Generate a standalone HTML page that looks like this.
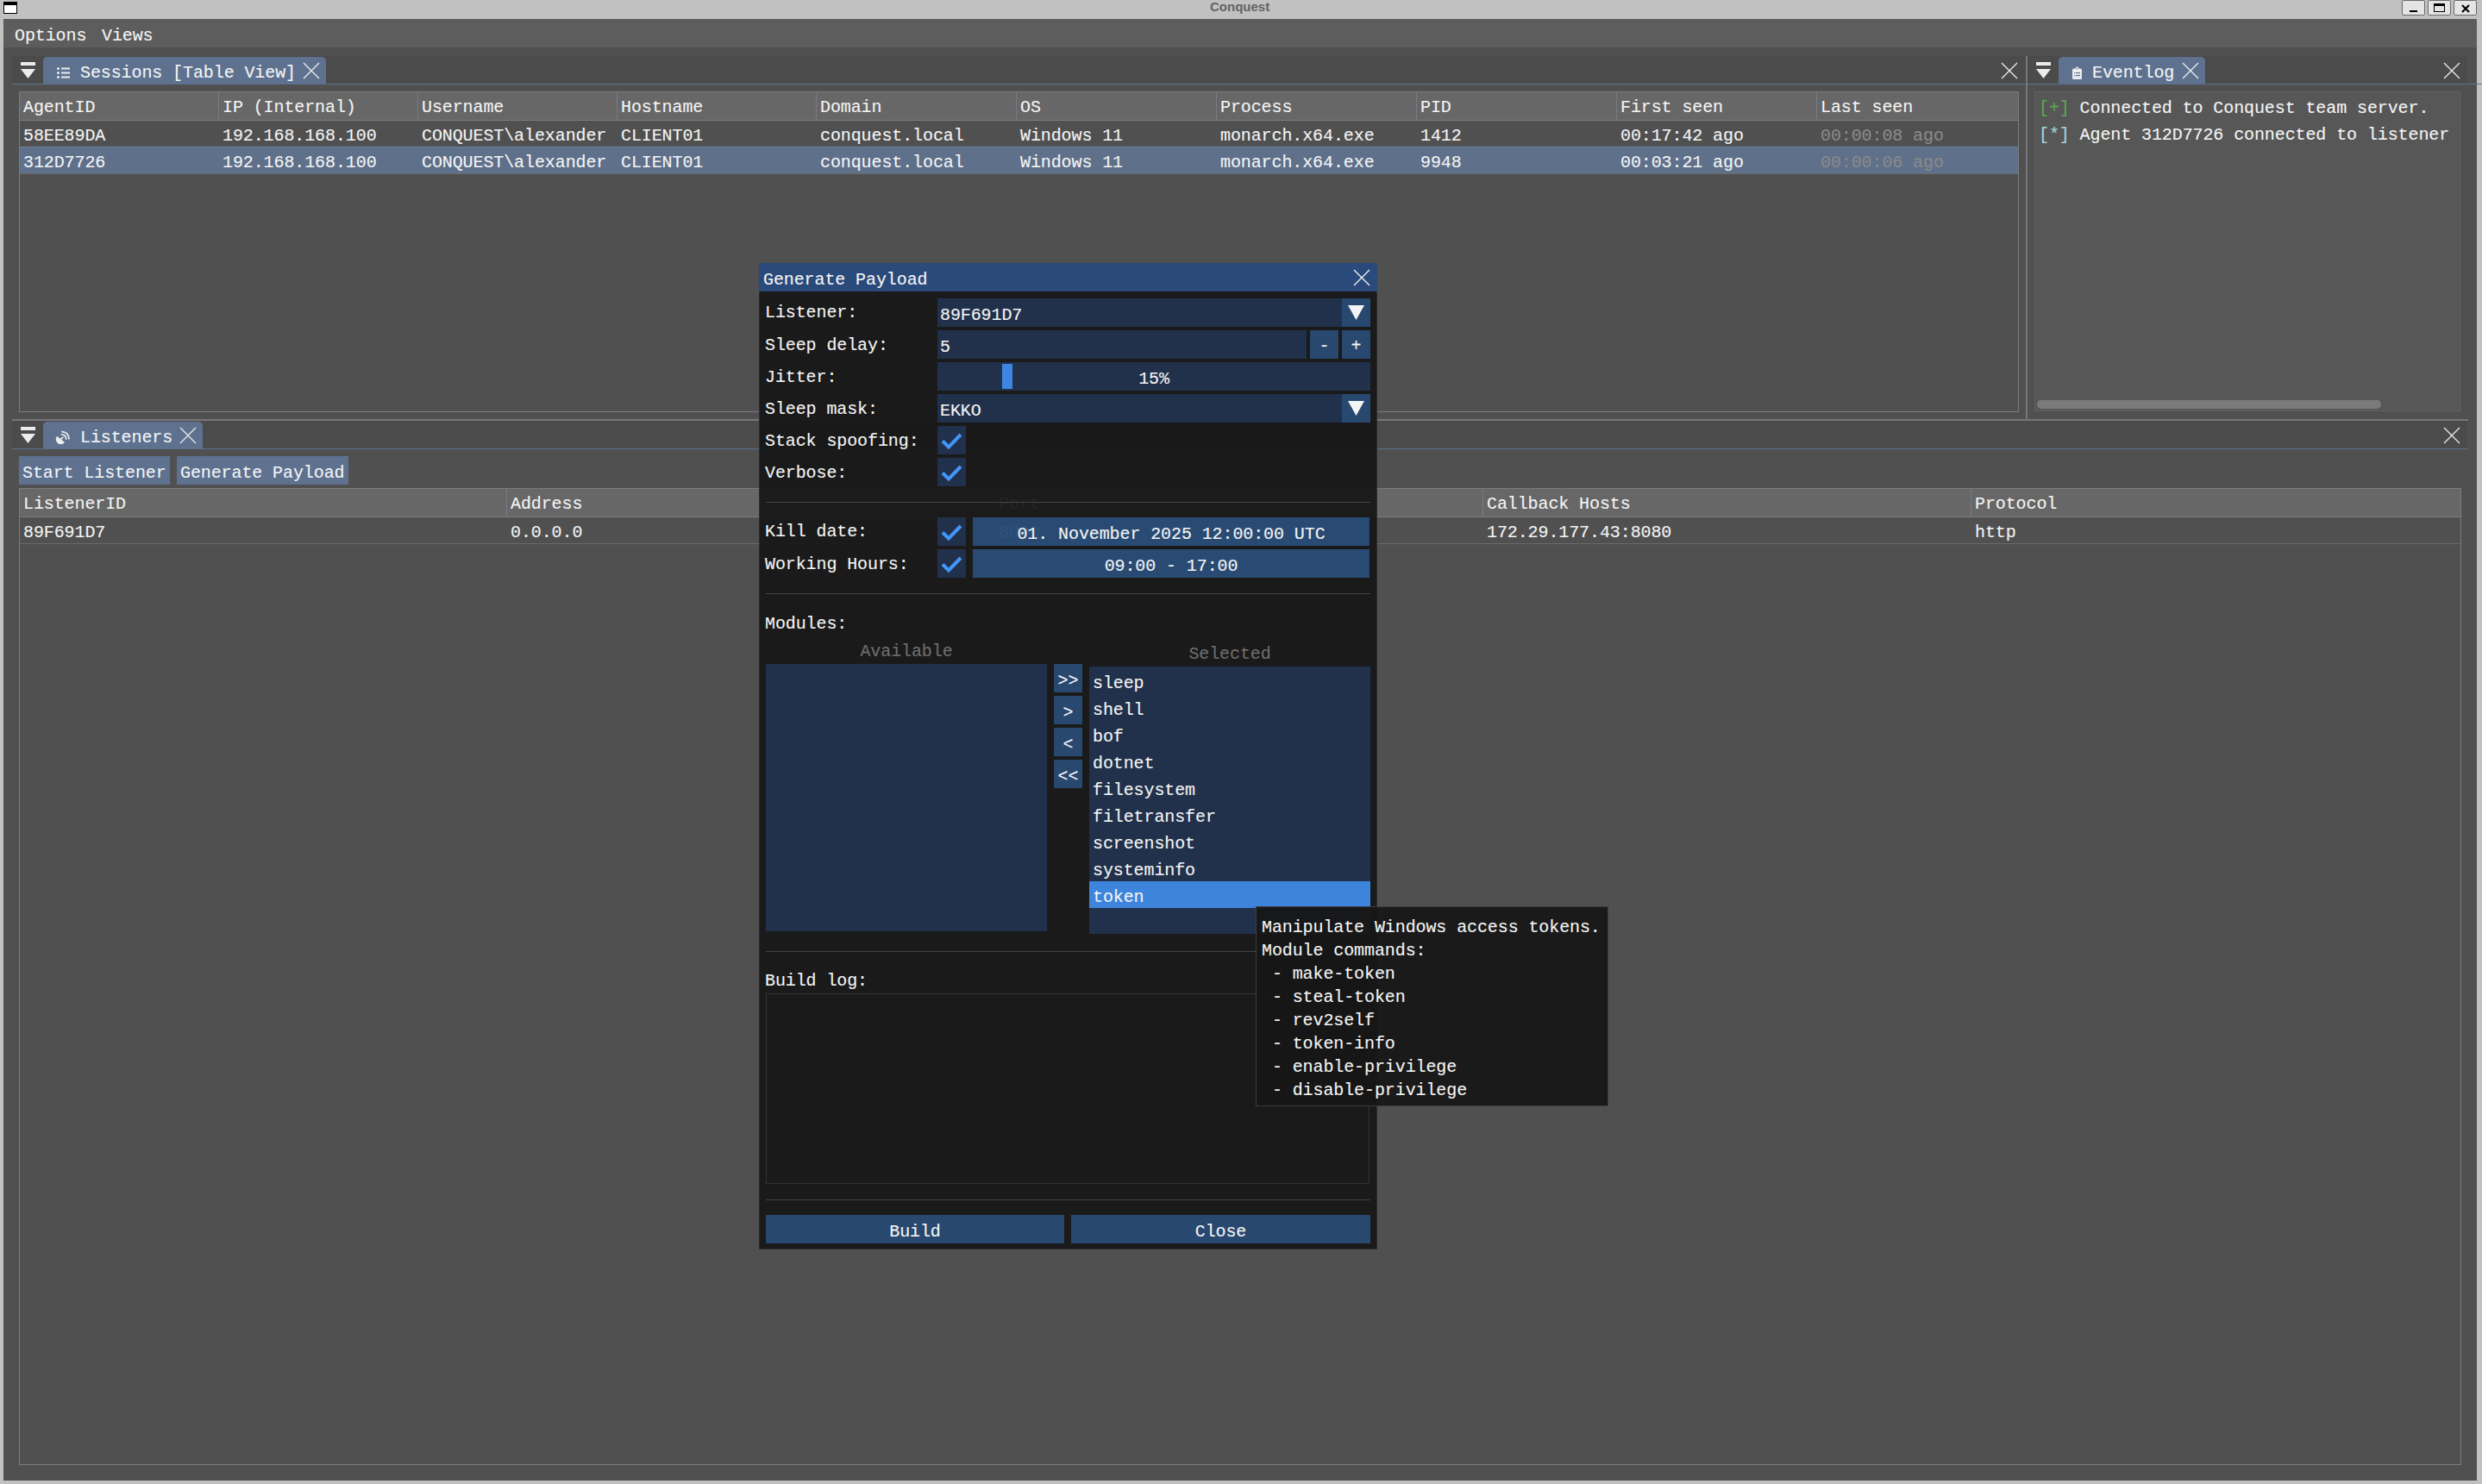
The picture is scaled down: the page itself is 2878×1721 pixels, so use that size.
<!DOCTYPE html>
<html><head><meta charset="utf-8">
<style>
html,body{margin:0;padding:0;}
body{width:2878px;height:1721px;position:relative;overflow:hidden;background:#c1c1c1;font-family:"Liberation Mono",monospace;}
div,span{box-sizing:border-box;}
.a{position:absolute;}
.t{position:absolute;white-space:pre;font-family:"Liberation Mono",monospace;font-size:20px;line-height:27px;letter-spacing:-0.1px;color:#f4f4f4;-webkit-text-stroke:0.12px currentColor;}
.g{color:#8a8a8a;}
.g2{color:#6e6e6e;}
.hl{position:absolute;height:1px;}
.vl{position:absolute;width:1px;}
svg{position:absolute;overflow:visible;}
</style></head><body>

<!-- ===== window frame ===== -->
<div class="a" style="left:4px;top:2px;width:16px;height:14px;background:#000;"></div>
<div class="a" style="left:5px;top:6px;width:14px;height:9px;background:#fff;"></div>
<div class="a" style="left:0;top:0;width:2878px;height:22px;font-family:'Liberation Sans',sans-serif;font-weight:bold;font-size:15px;line-height:22px;text-align:center;color:#636363;">
<span style="position:absolute;left:1403px;top:-3px;">Conquest</span></div>

<!-- app area -->
<div class="a" id="app" style="left:4px;top:22px;width:2868px;height:1695px;background:#505050;"></div>
<!-- menu bar -->
<div class="a" style="left:4px;top:22px;width:2868px;height:33px;background:#5d5d5d;"></div>
<div class="t" style="left:17px;top:28px;">Options</div>
<div class="t" style="left:118px;top:28px;">Views</div>


<!-- window buttons -->
<div class="a" style="left:2785px;top:0px;width:27px;height:18px;background:#e4e4e4;border:1px solid #6a6a6a;border-radius:2px;"></div>
<div class="a" style="left:2794px;top:12px;width:9px;height:2px;background:#000;"></div>
<div class="a" style="left:2815px;top:0px;width:27px;height:18px;background:#e4e4e4;border:1px solid #6a6a6a;border-radius:2px;"></div>
<div class="a" style="left:2822px;top:4px;width:13px;height:10px;border:1px solid #000;border-top-width:3px;"></div>
<div class="a" style="left:2845px;top:0px;width:27px;height:18px;background:#e4e4e4;border:1px solid #6a6a6a;border-radius:2px;"></div>
<svg style="left:2854px;top:5px;" width="10" height="10"><path d="M1 1L9 9M9 1L1 9" stroke="#000" stroke-width="2.2"/></svg>

<!-- ===== Sessions dock ===== -->
<div class="a" style="left:14px;top:65px;width:2335px;height:32px;background:#4b4b4b;"></div>
<div class="a" style="left:24px;top:72px;width:17px;height:4px;background:#ececec;"></div>
<svg style="left:24px;top:80px;" width="17" height="11"><path d="M0 0H17L8.5 11Z" fill="#ececec"/></svg>
<div class="a" style="left:50px;top:66px;width:328px;height:31px;background:#5e7290;border-radius:5px 5px 0 0;"></div>
<div class="hl" style="left:14px;top:97px;width:2335px;background:#5e7290;"></div>
<svg style="left:66px;top:78px;" width="15" height="13"><g fill="#ececec"><circle cx="1.5" cy="1.5" r="1.5"/><circle cx="1.5" cy="6.5" r="1.5"/><circle cx="1.5" cy="11.5" r="1.5"/><rect x="5" y="0.5" width="10" height="2"/><rect x="5" y="5.5" width="10" height="2"/><rect x="5" y="10.5" width="10" height="2"/></g></svg>
<div class="t" style="left:93px;top:71px;">Sessions [Table View]</div>
<svg style="left:352px;top:73px;" width="18" height="18"><path d="M0 0L18 18M18 0L0 18" stroke="#ececec" stroke-width="1.3"/></svg>
<svg style="left:2321px;top:73px;" width="18" height="18"><path d="M0 0L18 18M18 0L0 18" stroke="#ececec" stroke-width="1.3"/></svg>

<!-- sessions table -->
<div class="a" style="left:22px;top:106px;width:2319px;height:372px;border:1px solid #7b7b83;"></div>
<div class="a" style="left:23px;top:107px;width:2317px;height:32px;background:#676767;"></div>
<div class="hl" style="left:23px;top:139px;width:2317px;background:#7b7b83;"></div>
<div class="a" style="left:23px;top:171px;width:2317px;height:30px;background:#5e708a;"></div>
<div class="hl" style="left:23px;top:170px;width:2317px;background:#6f8099;"></div>
<div class="hl" style="left:23px;top:201px;width:2317px;background:#6a6a6e;"></div>
<div class="vl" style="left:253px;top:108px;height:31px;background:#7b7b83;"></div>
<div class="vl" style="left:484px;top:108px;height:31px;background:#7b7b83;"></div>
<div class="vl" style="left:715px;top:108px;height:31px;background:#7b7b83;"></div>
<div class="vl" style="left:946px;top:108px;height:31px;background:#7b7b83;"></div>
<div class="vl" style="left:1178px;top:108px;height:31px;background:#7b7b83;"></div>
<div class="vl" style="left:1410px;top:108px;height:31px;background:#7b7b83;"></div>
<div class="vl" style="left:1642px;top:108px;height:31px;background:#7b7b83;"></div>
<div class="vl" style="left:1874px;top:108px;height:31px;background:#7b7b83;"></div>
<div class="vl" style="left:2106px;top:108px;height:31px;background:#7b7b83;"></div>
<div class="t" style="left:27px;top:111px;">AgentID</div>
<div class="t" style="left:258px;top:111px;">IP (Internal)</div>
<div class="t" style="left:489px;top:111px;">Username</div>
<div class="t" style="left:720px;top:111px;">Hostname</div>
<div class="t" style="left:951px;top:111px;">Domain</div>
<div class="t" style="left:1183px;top:111px;">OS</div>
<div class="t" style="left:1415px;top:111px;">Process</div>
<div class="t" style="left:1647px;top:111px;">PID</div>
<div class="t" style="left:1879px;top:111px;">First seen</div>
<div class="t" style="left:2111px;top:111px;">Last seen</div>
<div class="t" style="left:27px;top:144px;">58EE89DA</div>
<div class="t" style="left:258px;top:144px;">192.168.168.100</div>
<div class="t" style="left:489px;top:144px;">CONQUEST\alexander</div>
<div class="t" style="left:720px;top:144px;">CLIENT01</div>
<div class="t" style="left:951px;top:144px;">conquest.local</div>
<div class="t" style="left:1183px;top:144px;">Windows 11</div>
<div class="t" style="left:1415px;top:144px;">monarch.x64.exe</div>
<div class="t" style="left:1647px;top:144px;">1412</div>
<div class="t" style="left:1879px;top:144px;">00:17:42 ago</div>
<div class="t g" style="left:2111px;top:144px;">00:00:08 ago</div>
<div class="t" style="left:27px;top:175px;">312D7726</div>
<div class="t" style="left:258px;top:175px;">192.168.168.100</div>
<div class="t" style="left:489px;top:175px;">CONQUEST\alexander</div>
<div class="t" style="left:720px;top:175px;">CLIENT01</div>
<div class="t" style="left:951px;top:175px;">conquest.local</div>
<div class="t" style="left:1183px;top:175px;">Windows 11</div>
<div class="t" style="left:1415px;top:175px;">monarch.x64.exe</div>
<div class="t" style="left:1647px;top:175px;">9948</div>
<div class="t" style="left:1879px;top:175px;">00:03:21 ago</div>
<div class="t g" style="left:2111px;top:175px;">00:00:06 ago</div>


<!-- ===== splitters ===== -->
<div class="a" style="left:2349px;top:65px;width:2px;height:421px;background:#76767b;"></div>
<div class="a" style="left:14px;top:486px;width:2848px;height:2px;background:#76767b;"></div>

<!-- ===== Eventlog dock ===== -->
<div class="a" style="left:2351px;top:65px;width:510px;height:32px;background:#4b4b4b;"></div>
<div class="a" style="left:2361px;top:72px;width:17px;height:4px;background:#ececec;"></div>
<svg style="left:2361px;top:80px;" width="17" height="11"><path d="M0 0H17L8.5 11Z" fill="#ececec"/></svg>
<div class="a" style="left:2387px;top:66px;width:170px;height:31px;background:#5e7290;border-radius:5px 5px 0 0;"></div>
<div class="hl" style="left:2351px;top:97px;width:2510px;background:#5e7290;"></div>
<svg style="left:2403px;top:77px;" width="11" height="15"><path d="M1.5 2.5H3.5A2 2 0 0 1 7.5 2.5H9.5A1.5 1.5 0 0 1 11 4V13.5A1.5 1.5 0 0 1 9.5 15H1.5A1.5 1.5 0 0 1 0 13.5V4A1.5 1.5 0 0 1 1.5 2.5Z" fill="#ececec"/><g fill="#5e7290"><circle cx="5.5" cy="2.6" r="0.8"/><rect x="2" y="7" width="1.2" height="1.2"/><rect x="4" y="7" width="5" height="1.2"/><rect x="2" y="10" width="1.2" height="1.2"/><rect x="4" y="10" width="5" height="1.2"/></g></svg>
<div class="t" style="left:2426px;top:71px;">Eventlog</div>
<svg style="left:2531px;top:73px;" width="18" height="18"><path d="M0 0L18 18M18 0L0 18" stroke="#ececec" stroke-width="1.3"/></svg>
<svg style="left:2834px;top:73px;" width="18" height="18"><path d="M0 0L18 18M18 0L0 18" stroke="#ececec" stroke-width="1.3"/></svg>
<div class="a" style="left:2359px;top:106px;width:494px;height:371px;background:#575757;border:1px solid #616161;"></div>
<div class="t" style="left:2364px;top:112px;"><span style="color:#5ca852">[+]</span> Connected to Conquest team server.</div>
<div class="t" style="left:2364px;top:143px;"><span style="color:#a6d6e0">[*]</span> Agent 312D7726 connected to listener</div>
<div class="a" style="left:2362px;top:464px;width:399px;height:10px;background:#7a7a7a;border-radius:5px;"></div>

<!-- ===== Listeners dock ===== -->
<div class="a" style="left:14px;top:488px;width:2847px;height:32px;background:#4b4b4b;"></div>
<div class="a" style="left:24px;top:495px;width:17px;height:4px;background:#ececec;"></div>
<svg style="left:24px;top:503px;" width="17" height="11"><path d="M0 0H17L8.5 11Z" fill="#ececec"/></svg>
<div class="a" style="left:50px;top:489px;width:185px;height:31px;background:#5e7290;border-radius:5px 5px 0 0;"></div>
<div class="hl" style="left:14px;top:520px;width:2847px;background:#5e7290;"></div>
<svg style="left:60px;top:495px;" width="30" height="25"><path d="M6.1 10.7A5.8 5.8 0 0 0 15.1 18.1Z" fill="#ececec"/><g fill="none" stroke="#ececec" stroke-width="1.8" stroke-linecap="round"><path d="M10.8 14.2L12.7 12.4"/><path d="M11.6 8.8A5.2 5.2 0 0 1 16.8 14"/><path d="M11.9 5.6A8.1 8.1 0 0 1 20 13.7"/></g></svg>
<div class="t" style="left:93px;top:494px;">Listeners</div>
<svg style="left:209px;top:496px;" width="18" height="18"><path d="M0 0L18 18M18 0L0 18" stroke="#ececec" stroke-width="1.3"/></svg>
<svg style="left:2834px;top:496px;" width="18" height="18"><path d="M0 0L18 18M18 0L0 18" stroke="#ececec" stroke-width="1.3"/></svg>
<div class="a" style="left:22px;top:529px;width:175px;height:33px;background:#5e7290;"></div>
<div class="t" style="left:26px;top:535px;">Start Listener</div>
<div class="a" style="left:205px;top:529px;width:199px;height:33px;background:#5e7290;"></div>
<div class="t" style="left:209px;top:535px;">Generate Payload</div>
<!-- listeners table -->
<div class="a" style="left:22px;top:566px;width:2832px;height:1133px;border:1px solid #7b7b83;"></div>
<div class="a" style="left:23px;top:567px;width:2830px;height:32px;background:#676767;"></div>
<div class="hl" style="left:23px;top:599px;width:2830px;background:#7b7b83;"></div>
<div class="hl" style="left:23px;top:630px;width:2830px;background:#6a6a6e;"></div>
<div class="vl" style="left:587px;top:568px;height:31px;background:#7b7b83;"></div>
<div class="vl" style="left:1153px;top:568px;height:31px;background:#7b7b83;"></div>
<div class="vl" style="left:1719px;top:568px;height:31px;background:#7b7b83;"></div>
<div class="vl" style="left:2285px;top:568px;height:31px;background:#7b7b83;"></div>
<div class="t" style="left:27px;top:571px;">ListenerID</div>
<div class="t" style="left:592px;top:571px;">Address</div>
<div class="t" style="left:1158px;top:571px;">Port</div>
<div class="t" style="left:1724px;top:571px;">Callback Hosts</div>
<div class="t" style="left:2290px;top:571px;">Protocol</div>
<div class="t" style="left:27px;top:604px;">89F691D7</div>
<div class="t" style="left:592px;top:604px;">0.0.0.0</div>
<div class="t" style="left:1158px;top:604px;">8080</div>
<div class="t" style="left:1724px;top:604px;">172.29.177.43:8080</div>
<div class="t" style="left:2290px;top:604px;">http</div>


<!-- ===== Generate Payload dialog ===== -->
<div class="a" style="left:880px;top:305px;width:717px;height:1144px;background:rgba(22,22,22,0.94);border:1px solid rgba(60,60,70,0.6);"></div>
<div class="a" style="left:880px;top:305px;width:717px;height:33px;background:#294a7a;"></div>
<div class="t" style="left:885px;top:311px;">Generate Payload</div>
<svg style="left:1570px;top:313px;" width="18" height="18"><path d="M0 0L18 18M18 0L0 18" stroke="#f4f4f4" stroke-width="1.3"/></svg>
<div class="t" style="left:887px;top:349px;">Listener:</div>
<div class="t" style="left:887px;top:386.5px;">Sleep delay:</div>
<div class="t" style="left:887px;top:423.5px;">Jitter:</div>
<div class="t" style="left:887px;top:460.5px;">Sleep mask:</div>
<div class="t" style="left:887px;top:497.5px;">Stack spoofing:</div>
<div class="t" style="left:887px;top:534.5px;">Verbose:</div>
<div class="t" style="left:887px;top:603px;">Kill date:</div>
<div class="t" style="left:887px;top:640.5px;">Working Hours:</div>
<div class="t" style="left:887px;top:709.5px;">Modules:</div>
<div class="t" style="left:887px;top:1124px;">Build log:</div>
<div class="a" style="left:1087px;top:346px;width:502px;height:33px;background:#21314b;"></div>
<div class="a" style="left:1556px;top:346px;width:33px;height:33px;background:#284870;"></div>
<svg style="left:1563px;top:354px;" width="19" height="17"><path d="M0 0H19L9.5 17Z" fill="#f4f4f4"/></svg>
<div class="t" style="left:1090px;top:352px;">89F691D7</div>
<div class="a" style="left:1087px;top:383px;width:428px;height:33px;background:#21314b;"></div>
<div class="a" style="left:1519px;top:383px;width:33px;height:33px;background:#284870;"></div>
<div class="a" style="left:1556px;top:383px;width:33px;height:33px;background:#284870;"></div>
<div class="t" style="left:1090px;top:389px;">5</div>
<div class="t" style="left:1519px;top:388px;width:33px;text-align:center;">-</div>
<div class="t" style="left:1556px;top:388px;width:33px;text-align:center;">+</div>
<div class="a" style="left:1087px;top:420px;width:502px;height:33px;background:#21314b;"></div>
<div class="a" style="left:1162px;top:422px;width:12px;height:29px;background:#3d85e0;"></div>
<div class="t" style="left:1087px;top:425.5px;width:502px;text-align:center;">15%</div>
<div class="a" style="left:1087px;top:457px;width:502px;height:33px;background:#21314b;"></div>
<div class="a" style="left:1556px;top:457px;width:33px;height:33px;background:#284870;"></div>
<svg style="left:1563px;top:465px;" width="19" height="17"><path d="M0 0H19L9.5 17Z" fill="#f4f4f4"/></svg>
<div class="t" style="left:1090px;top:463px;">EKKO</div>
<div class="a" style="left:1087px;top:494px;width:33px;height:33px;background:#21314b;"></div>
<svg style="left:1087px;top:494px;" width="33" height="33"><path d="M6 17.5L13 24.5L27 10" fill="none" stroke="#4296fa" stroke-width="4"/></svg>
<div class="a" style="left:1087px;top:531px;width:33px;height:33px;background:#21314b;"></div>
<svg style="left:1087px;top:531px;" width="33" height="33"><path d="M6 17.5L13 24.5L27 10" fill="none" stroke="#4296fa" stroke-width="4"/></svg>
<div class="hl" style="left:888px;top:582px;width:701px;background:#424249;"></div>
<div class="a" style="left:1087px;top:600px;width:33px;height:33px;background:#21314b;"></div>
<svg style="left:1087px;top:600px;" width="33" height="33"><path d="M6 17.5L13 24.5L27 10" fill="none" stroke="#4296fa" stroke-width="4"/></svg>
<div class="a" style="left:1128px;top:600px;width:460px;height:33px;background:rgba(66,150,250,0.4);"></div>
<div class="t" style="left:1128px;top:605.5px;width:460px;text-align:center;">01. November 2025 12:00:00 UTC</div>
<div class="a" style="left:1087px;top:637px;width:33px;height:33px;background:#21314b;"></div>
<svg style="left:1087px;top:637px;" width="33" height="33"><path d="M6 17.5L13 24.5L27 10" fill="none" stroke="#4296fa" stroke-width="4"/></svg>
<div class="a" style="left:1128px;top:637px;width:460px;height:33px;background:rgba(66,150,250,0.4);"></div>
<div class="t" style="left:1128px;top:642.5px;width:460px;text-align:center;">09:00 - 17:00</div>
<div class="hl" style="left:888px;top:688px;width:701px;background:#424249;"></div>
<div class="t g2" style="left:888px;top:741.5px;width:326px;text-align:center;">Available</div>
<div class="t g2" style="left:1263px;top:744.5px;width:326px;text-align:center;">Selected</div>
<div class="a" style="left:888px;top:770px;width:326px;height:310px;background:#21314b;"></div>
<div class="a" style="left:1222px;top:770px;width:33px;height:33px;background:#284870;"></div>
<div class="t" style="left:1222px;top:775.5px;width:33px;text-align:center;">&gt;&gt;</div>
<div class="a" style="left:1222px;top:807px;width:33px;height:33px;background:#284870;"></div>
<div class="t" style="left:1222px;top:812.5px;width:33px;text-align:center;">&gt;</div>
<div class="a" style="left:1222px;top:844px;width:33px;height:33px;background:#284870;"></div>
<div class="t" style="left:1222px;top:849.5px;width:33px;text-align:center;">&lt;</div>
<div class="a" style="left:1222px;top:881px;width:33px;height:33px;background:#284870;"></div>
<div class="t" style="left:1222px;top:886.5px;width:33px;text-align:center;">&lt;&lt;</div>
<div class="a" style="left:1263px;top:773px;width:326px;height:310px;background:#21314b;"></div>
<div class="a" style="left:1263px;top:1022px;width:326px;height:31px;background:#3d84dc;"></div>
<div class="t" style="left:1267px;top:779px;">sleep</div>
<div class="t" style="left:1267px;top:810px;">shell</div>
<div class="t" style="left:1267px;top:841px;">bof</div>
<div class="t" style="left:1267px;top:872px;">dotnet</div>
<div class="t" style="left:1267px;top:903px;">filesystem</div>
<div class="t" style="left:1267px;top:934px;">filetransfer</div>
<div class="t" style="left:1267px;top:965px;">screenshot</div>
<div class="t" style="left:1267px;top:996px;">systeminfo</div>
<div class="t" style="left:1267px;top:1027px;">token</div>
<div class="hl" style="left:888px;top:1103px;width:701px;background:#424249;"></div>
<div class="a" style="left:888px;top:1152px;width:700px;height:221px;border:1px solid #333338;"></div>
<div class="hl" style="left:888px;top:1391px;width:701px;background:#424249;"></div>
<div class="a" style="left:888px;top:1409px;width:346px;height:33px;background:#284870;"></div>
<div class="t" style="left:888px;top:1415px;width:346px;text-align:center;">Build</div>
<div class="a" style="left:1242px;top:1409px;width:347px;height:33px;background:#284870;"></div>
<div class="t" style="left:1242px;top:1415px;width:347px;text-align:center;">Close</div>

<!-- ===== tooltip ===== -->
<div class="a" style="left:1456px;top:1051px;width:409px;height:232px;background:rgba(22,22,22,0.94);border:1px solid #3c3c44;"></div>
<div class="t" style="left:1463px;top:1062px;">Manipulate Windows access tokens.</div>
<div class="t" style="left:1463px;top:1089px;">Module commands:</div>
<div class="t" style="left:1463px;top:1116px;"> - make-token</div>
<div class="t" style="left:1463px;top:1143px;"> - steal-token</div>
<div class="t" style="left:1463px;top:1170px;"> - rev2self</div>
<div class="t" style="left:1463px;top:1197px;"> - token-info</div>
<div class="t" style="left:1463px;top:1224px;"> - enable-privilege</div>
<div class="t" style="left:1463px;top:1251px;"> - disable-privilege</div>

</body></html>
